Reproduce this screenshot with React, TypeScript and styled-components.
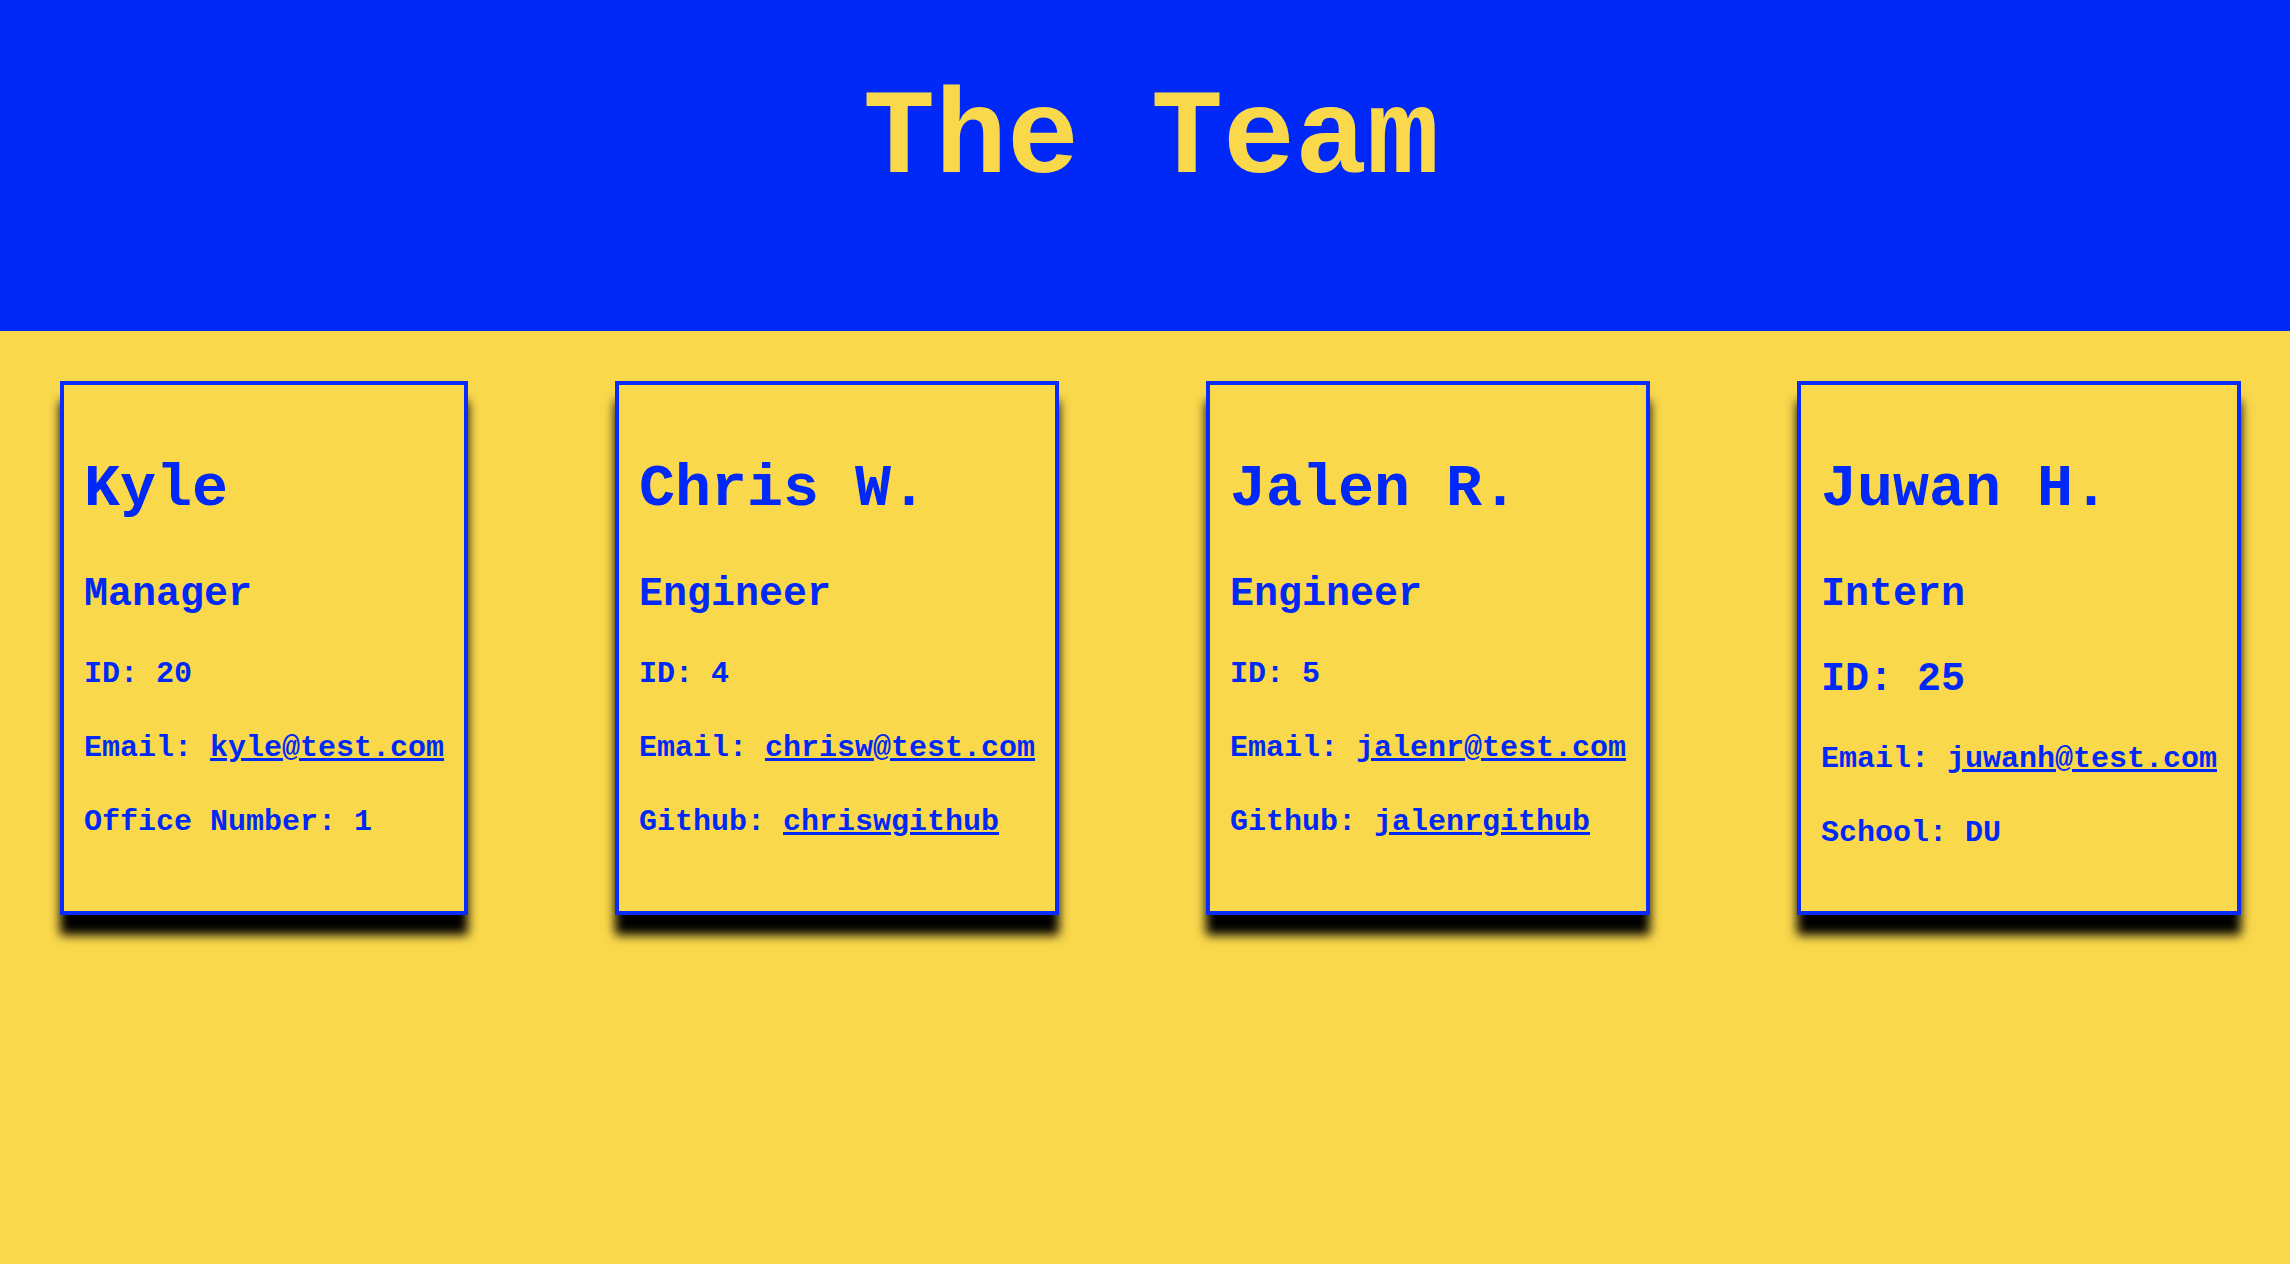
import styled, { createGlobalStyle } from "styled-components";

const GlobalStyle = createGlobalStyle`
  html, body {
    margin: 0;
    padding: 0;
    background: #fad84c;
  }
  body {
    min-height: 100vh;
    font-family: "Courier New", "Liberation Mono", monospace;
    font-weight: bold;
    color: #0028f6;
  }
`;

const Header = styled.header`
  height: 331px;
  box-sizing: border-box;
  padding-top: 72px;
  background: #0028f6;
  text-align: center;
`;

const Title = styled.h1`
  margin: 0;
  padding-left: 12px;
  font-size: 120px;
  font-weight: bold;
  color: #fad84c;
`;

const Team = styled.main`
  display: flex;
  justify-content: space-between;
  align-items: flex-start;
  padding: 50px 49px 120px 60px;
`;

const CardBox = styled.section`
  box-sizing: border-box;
  height: 534px;
  padding: 30px 20px;
  border: 4px solid #0a2bff;
  background: #fad84c;
  box-shadow: 0 20px 10px #000;
`;

const Name = styled.h2`
  margin: 40px 0 49px;
  font-size: 60px;
`;

const Role = styled.h3`
  margin: 49px 0 40px;
  font-size: 40px;
`;

const Line = styled.p<{ $big?: boolean }>`
  margin: 40px 0;
  font-size: ${(p) => (p.$big ? "40px" : "30px")};
  white-space: nowrap;
`;

const Link = styled.a`
  color: inherit;
  text-decoration: underline;
`;

type Member = {
  name: string;
  role: string;
  id: number;
  email: string;
  extra: { label: string; value: string; link?: boolean };
};

const members: Member[] = [
  {
    name: "Kyle",
    role: "Manager",
    id: 20,
    email: "kyle@test.com",
    extra: { label: "Office Number", value: "1" },
  },
  {
    name: "Chris W.",
    role: "Engineer",
    id: 4,
    email: "chrisw@test.com",
    extra: { label: "Github", value: "chriswgithub", link: true },
  },
  {
    name: "Jalen R.",
    role: "Engineer",
    id: 5,
    email: "jalenr@test.com",
    extra: { label: "Github", value: "jalenrgithub", link: true },
  },
  {
    name: "Juwan H.",
    role: "Intern",
    id: 25,
    email: "juwanh@test.com",
    extra: { label: "School", value: "DU" },
  },
];

const Card = ({ m }: { m: Member }) => (
  <CardBox>
    <Name>{m.name}</Name>
    <Role>{m.role}</Role>
    <Line $big={m.role === "Intern"}>ID: {m.id}</Line>
    <Line>
      Email: <Link href={`mailto:${m.email}`}>{m.email}</Link>
    </Line>
    <Line>
      {m.extra.label}:{" "}
      {m.extra.link ? (
        <Link href={`https://github.com/${m.extra.value}`}>
          {m.extra.value}
        </Link>
      ) : (
        m.extra.value
      )}
    </Line>
  </CardBox>
);

export default function App() {
  return (
    <>
      <GlobalStyle />
      <Header>
        <Title>The Team</Title>
      </Header>
      <Team>
        {members.map((m) => (
          <Card key={m.name} m={m} />
        ))}
      </Team>
    </>
  );
}
